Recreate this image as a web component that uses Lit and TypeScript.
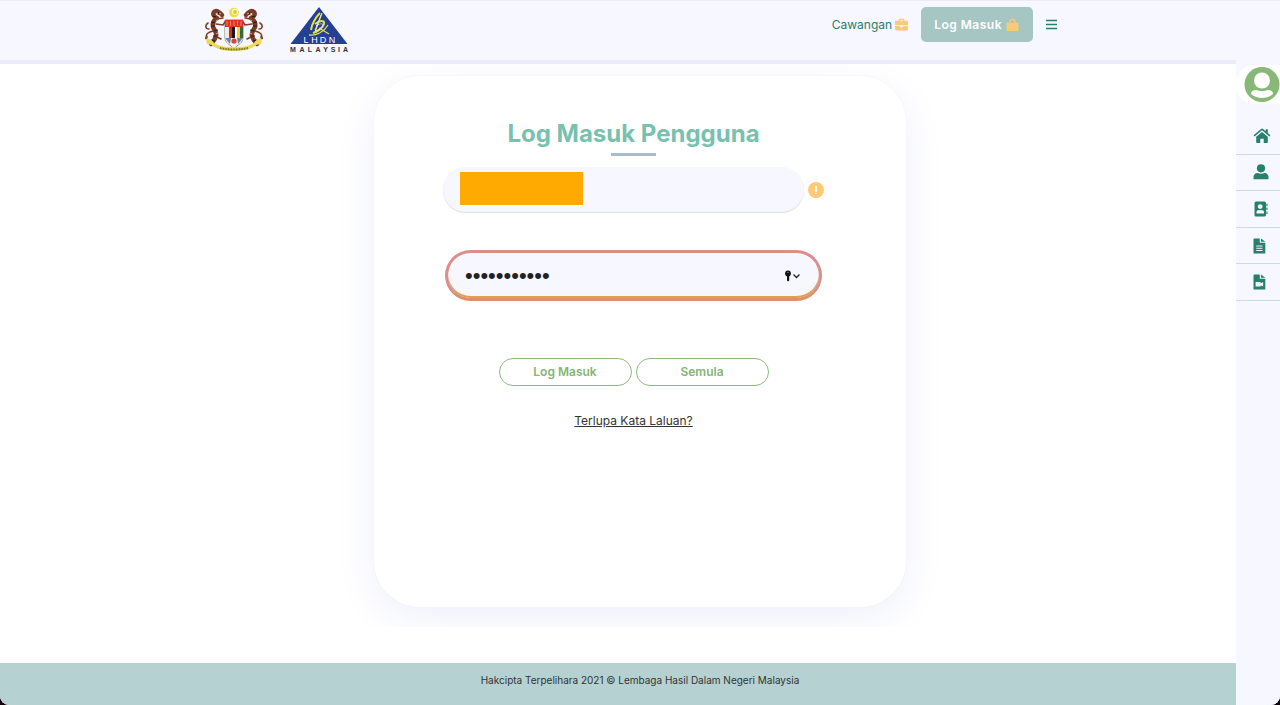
import { LitElement, html, css, svg } from "lit";
import { customElement, state } from "lit/decorators.js";

const sideLinks = [
  {
    label: "Laman Utama",
    icon: svg`<svg class="icon" viewBox="0 0 18 16"><path d="M9 3.900 3.200 8.800v5.500c0 .4.3.7.7.7h3.400v-4.300h3.400V15h3.400c.4 0 .7-.3.7-.7V8.800z"/><path d="M17.400 7.300 14.800 5V1.200h-2.100v2L10 .9a1.500 1.500 0 0 0-2 0L.6 7.300l1 1.200L9 2.300l7.400 6.200z"/></svg>`,
  },
  {
    label: "Profil",
    icon: svg`<svg class="icon" viewBox="0 0 18 16"><circle cx="8" cy="4.300" r="4.100"/><path d="M.5 15.200v-2.400c0-2.200 1.600-3.800 4-3.900 2.200 1 4.800 1 7 0 2.400.1 4 1.700 4 3.900v2.400z"/></svg>`,
  },
  {
    label: "Hubungi",
    icon: svg`<svg class="icon" viewBox="0 0 18 16"><path fill-rule="evenodd" d="M3 .5h8.500a1.500 1.500 0 0 1 1.500 1.500v12a1.500 1.500 0 0 1-1.500 1.500H3A1.500 1.500 0 0 1 1.500 14V2A1.500 1.500 0 0 1 3 .5zm4.200 2.700a2.400 2.400 0 1 0 0 4.800 2.400 2.400 0 0 0 0-4.800zM3.500 12.600h7.500v-1.400c0-1.500-1.200-2.300-2.400-2.300-.9.400-1.800.400-2.700 0-1.200 0-2.400.8-2.400 2.300z"/><path d="M13.400 2.800h1.100v2.500h-1.100zm0 3.800h1.100v2.500h-1.100zm0 3.800h1.100v2.500h-1.100z"/></svg>`,
  },
  {
    label: "Borang",
    icon: svg`<svg class="icon" viewBox="0 0 18 16"><path fill-rule="evenodd" d="M1.500.5h5.300v4.300h5.500v10.700H.5v-14a1 1 0 0 1 1-1zM3.300 7.500v1h6.200v-1zm0 2.200v1h6.200v-1zm0 2.200v1h6.200v-1z"/><path d="M8 .5 12.300 3.800H8z"/></svg>`,
  },
  {
    label: "Video",
    icon: svg`<svg class="icon" viewBox="0 0 18 16"><path fill-rule="evenodd" d="M1.500.5h5.300v4.300h5.500v10.700H.5v-14a1 1 0 0 1 1-1zM2.600 8v4.600h5v-1.400l2.500 1.400V8L7.600 9.400V8z"/><path d="M8 .5 12.300 3.800H8z"/></svg>`,
  },
];

const tiger = svg`
  <path d="M17 8c-3-4-6-5-8-3-2 3 1 5 3 6-3 2-5 5-4 9 2 4 4 6 3 9-1 4-3 6-5 8" fill="none" stroke="#7b3b25" stroke-width="4.500" stroke-linecap="round" stroke-linejoin="round"/>
  <path d="M12 12l6-1M11 17l7 1 2-3M8 24c-4 1-8 3-6 6 0 2-2 2-2 0M10 29l6 3M3 16c-3 2-3 6 1 6" fill="none" stroke="#823e24" stroke-width="1.600" stroke-linecap="round"/>
  <path d="m8 9 3 1M6 15l4 1M6 19l4 0M9 24l4-1M8 29l4 0M6 33l4 1M14 5l-1 3" stroke="#2b1712" stroke-width="1"/>
  <path d="m14 6 2 1M11 14l2-1M11 27l2-1" stroke="#e5a87a" stroke-width="1"/>`;

const crest = svg`
  <svg class="crest" viewBox="0 0 58 46" role="img" aria-label="Jata Negara Malaysia">
    <circle cx="29" cy="5.500" r="4.800" fill="#f0dc43"/>
    <circle cx="30" cy="4.800" r="3" fill="#fafbe9"/>
    <circle cx="30" cy="5" r="2" fill="#e2ca34"/>
    ${tiger}
    <g transform="translate(58 0) scale(-1 1)">${tiger}</g>
    <path d="M20 13h18v17c0 6-5 8-9 11-4-3-9-5-9-11z" fill="#fff" stroke="#554b40" stroke-width=".7"/>
    <path d="M20 13h18v7H20z" fill="#df3029"/>
    <path d="M22 14v5M25.500 14v5M29 14v5M32.500 14v5M36 14v5" stroke="#f19a60" stroke-width=".8"/>
    <path d="M20 20h4v11h-4z" fill="#e8efe2"/>
    <path d="M24 20h3v11h-3z" fill="#cf2a2b"/>
    <path d="M27 20h3v11h-3z" fill="#191919"/>
    <path d="M30 20h2v11h-2z" fill="#fff"/>
    <path d="M32 20h3v11h-3z" fill="#efcf35"/>
    <path d="M35 20h3v11h-3z" fill="#36674b"/>
    <path d="M20 31h18c-1 5-5 6-9 10-4-4-8-5-9-10z" fill="#f4f2e5"/>
    <path d="m20 31 5 6 1-6zM38 31l-5 6-1-6z" fill="#6f83ad"/>
    <circle cx="29" cy="34" r="2.600" fill="#dc4142"/>
    <path d="M1 32c4-1 6 1 8 4 6 4 14 4 20 4s14 0 20-4c2-3 4-5 8-4l-1 5-5 1c-5 5-14 6-22 6S12 43 7 38l-5-1z" fill="#eadc57"/>
    <path d="M15 41c8 2 20 2 28 0" fill="none" stroke="#776c2b" stroke-width="2" stroke-dasharray="1 .6"/>
  </svg>`;

const lhdn = svg`
  <svg class="lhdn" viewBox="0 0 60 46" role="img" aria-label="LHDN Malaysia">
    <path d="M30 0 58.500 37H1.500z" fill="#253f93"/>
    <path d="M31 6c-4 4-8 11-9 17M26 17c5-4 10-4 9 0-1 4-7 8-11 9" fill="none" stroke="#e1df45" stroke-width="2"/>
    <path d="M33 6 26 25M30 21l10 6M39 18c-4 7-12 11-19 10" fill="none" stroke="#e1df45" stroke-width="1.300"/>
    <path d="m32 8-6 15M27 19c4-3 8-3 7 0-1 2-4 4-8 5" fill="none" stroke="#fff" stroke-width=".6"/>
    <g class="lhdn-name">
      ${[..."LHDN"].map((c, i) => svg`<text x=${[17, 25.500, 34, 43][i]} y="36" text-anchor="middle">${c}</text>`)}
    </g>
    <g class="lhdn-land">
      ${[..."MALAYSIA"].map((c, i) => svg`<text x=${[4, 13, 21, 29, 36.500, 44, 50, 56.500][i]} y="45" text-anchor="middle">${c}</text>`)}
    </g>
  </svg>`;

@customElement("app-root")
export class AppRoot extends LitElement {
  @state() private password = "kata-laluan";

  static styles = css`
    :host {
      display: block;
      background: #160309;
      font-family: Inter, "Liberation Sans", sans-serif;
      color: #333;
    }
    * { box-sizing: border-box; }
    a { color: inherit; text-decoration: none; }
    .page {
      position: relative;
      display: flex;
      flex-direction: column;
      min-height: 100vh;
      background: #fff;
      border-radius: 0 0 9px 9px;
      overflow: hidden;
    }
    .header {
      background: #f6f7ff;
      border-top: 1px solid #ebecf3;
      border-bottom: 4px solid #ebecfa;
    }
    .header-inner {
      display: flex;
      justify-content: space-between;
      align-items: flex-start;
      max-width: 870px;
      height: 59px;
      margin: 0 auto;
      padding: 6px 18px 0 0;
    }
    .brand { display: flex; gap: 26px; }
    .crest { width: 58px; height: 46px; }
    .lhdn { width: 60px; height: 46px; }
    .lhdn-name { font: 9px "Liberation Sans", sans-serif; fill: #fff; }
    .lhdn-land { font: bold 7px "Liberation Sans", sans-serif; fill: #30313c; }
    .nav { display: flex; align-items: center; gap: 13px; color: #26806c; }
    .nav-link { display: flex; align-items: center; gap: 3px; font-size: 12px; }
    .nav-icon { width: 13px; height: 14px; fill: #fbca74; }
    .login-link {
      display: flex;
      align-items: center;
      gap: 4px;
      height: 35px;
      padding: 0 14px 0 13px;
      border-radius: 5px;
      background: #a5c6c3;
      color: #fff;
      font-size: 12px;
      font-weight: 600;
      letter-spacing: 0.5px;
    }
    .menu { display: block; padding: 0; border: 0; background: none; color: inherit; }
    .menu-icon { display: block; width: 11px; height: 11px; }
    .section { flex: none; padding: 12px 60px 20px; overflow: hidden; }
    .card {
      display: flex;
      flex-direction: column;
      align-items: center;
      max-width: 532px;
      min-height: 531px;
      margin: 0 auto;
      padding: 43px 82px 0 69px;
      border-radius: 46px;
      background: #fff;
      box-shadow: 0 12px 44px #eff0fb, 0 0 2px #eeeef4;
    }
    .title {
      margin: 0;
      color: #77c1ae;
      font-size: 24px;
      line-height: 30px;
      font-weight: 700;
      white-space: nowrap;
    }
    .rule { width: 45px; height: 3px; margin-top: 4px; background: #a9bbcf; }
    .form { display: flex; flex-direction: column; align-items: center; width: 100%; margin-top: 11px; }
    .row { display: flex; align-items: center; gap: 4px; width: 100%; }
    .field { border: 0; outline: 0; background: #f6f7ff; color: #222; }
    .user {
      flex: 1;
      min-width: 0;
      height: 45px;
      border-radius: 23px;
      padding: 0 17px;
      background: linear-gradient(#ffaa00, #ffaa00) 17px 5px / 123px 33px no-repeat #f6f7ff;
      box-shadow: 0 1px 1px #dcdde4;
      font: 14px Inter, "Liberation Sans", sans-serif;
    }
    .info { width: 16px; height: 16px; padding: 0; border: 0; background: none; }
    .info-icon { display: block; width: 16px; height: 16px; }
    .secret {
      display: flex;
      align-items: center;
      width: 377px;
      max-width: 100%;
      height: 51px;
      margin-top: 38px;
      padding: 0 18px 0 17px;
      border: 3px solid #dc8e8a;
      border-bottom-color: #dc9068;
      border-radius: 26px;
      background: #f6f7ff;
      box-shadow: inset 0 -2px 0 #e0a050;
    }
    .password {
      flex: 1;
      min-width: 0;
      height: 40px;
      padding: 0;
      background: transparent;
      font: 22px "Liberation Sans", sans-serif;
    }
    .key-icon { width: 16px; height: 12px; }
    .actions { display: flex; gap: 4px; margin-top: 57px; }
    .action {
      width: 133px;
      height: 28px;
      padding: 0;
      border: 1px solid #8ebb7c;
      border-radius: 14px;
      background: #fff;
      color: #84b571;
      font: 600 12px/16px Inter, "Liberation Sans", sans-serif;
    }
    .forgot { margin-top: 27px; font-size: 12px; line-height: 16px; text-decoration: underline; }
    .footer {
      flex: 1;
      margin-top: 36px;
      padding: 9px 60px;
      background: #b6d1d1;
      font-size: 10px;
      line-height: 16px;
      text-align: center;
    }
    .sidebar {
      position: absolute;
      top: 60px;
      right: 0;
      bottom: 0;
      width: 44px;
      background: #f6f7ff;
    }
    .avatar { display: block; height: 39px; margin-top: 5px; padding: 2px 0 0 8px; border-radius: 18px 0 0 18px; background: #fff; }
    .avatar-icon { display: block; width: 36px; height: 36px; }
    .side-list {
      display: grid;
      grid-auto-rows: 1fr;
      height: 183px;
      margin: 14px 0 0;
      padding: 0;
      list-style: none;
    }
    .side-item { border-bottom: 1px solid #c6dcea; }
    .side-link {
      display: flex;
      align-items: center;
      height: 100%;
      padding-left: 17px;
      color: #26806c;
    }
    .icon { width: 18px; height: 16px; fill: currentColor; }
  `;

  render() {
    return html`
      <div class="page">
        <header class="header">
          <div class="header-inner">
            <div class="brand">${crest}${lhdn}</div>
            <nav class="nav">
              <a class="nav-link" href="#cawangan">Cawangan
                <svg class="nav-icon" viewBox="0 0 14 14"><path fill-rule="evenodd" d="M4 2.500V1.200C4 .6 4.400.200 5 .200h4c.6 0 1 .4 1 1v1.300h2.600c.8 0 1.400.6 1.400 1.400v3.300H0V3.900C0 3.100.6 2.500 1.400 2.500zm1.500 0h3v-.9h-3zM0 8h5.300v1.300h3.400V8H14v3.400c0 .8-.6 1.400-1.400 1.400H1.400C.6 12.800 0 12.200 0 11.400z"/></svg>
              </a>
              <a class="login-link" href="#login">Log Masuk
                <svg class="nav-icon" viewBox="0 0 14 14"><path fill-rule="evenodd" d="M3.500 4.500V3.700a3.500 3.500 0 0 1 7 0v.8h1.700c.7 0 1.300.6 1.300 1.300v6.200c0 .8-.6 1.500-1.500 1.500H2C1.100 13.500.500 12.800.500 12V5.800C.5 5.100 1.100 4.500 1.800 4.500zm1.500 0h4v-.8a2 2 0 0 0-4 0z"/></svg>
              </a>
              <button class="menu" type="button" aria-label="Menu">
                <svg class="menu-icon" viewBox="0 0 11 11"><path d="M0 1.500h11M0 5.500h11M0 9.500h11" stroke="currentColor" stroke-width="1.600"/></svg>
              </button>
            </nav>
          </div>
        </header>

        <main class="section">
          <div class="card">
            <h1 class="title">Log Masuk Pengguna</h1>
            <div class="rule"></div>
            <form class="form" @submit=${(e: Event) => e.preventDefault()}>
              <div class="row">
                <input class="field user" type="text" aria-label="No. Pengenalan" />
                <button class="info" type="button" aria-label="Maklumat">
                  <svg class="info-icon" viewBox="0 0 16 16"><circle cx="8" cy="8" r="8" fill="#fbca74"/><path d="M8 4v5.800" stroke="#fff" stroke-width="1.800"/><circle cx="8" cy="11.500" r=".7" fill="#fff"/></svg>
                </button>
              </div>
              <div class="secret">
                <input class="field password" type="password" aria-label="Kata Laluan" .value=${this.password}
                  @input=${(e: Event) => (this.password = (e.target as HTMLInputElement).value)} />
                <svg class="key-icon" viewBox="0 0 16 12"><circle cx="3" cy="3.500" r="2.900" fill="#111"/><path d="M2 6h2.200v4.500L3.100 11.500 2 10.500z" fill="#111"/><circle cx="3" cy="2.200" r=".5" fill="#f6f7ff"/><path d="m8.500 4.500 3 3 3-3" fill="none" stroke="#222" stroke-width="1.300"/></svg>
              </div>
              <div class="actions">
                <button class="action" type="submit">Log Masuk</button>
                <button class="action" type="reset">Semula</button>
              </div>
            </form>
            <a class="forgot" href="#lupa">Terlupa Kata Laluan?</a>
          </div>
        </main>

        <footer class="footer">Hakcipta Terpelihara 2021 © Lembaga Hasil Dalam Negeri Malaysia</footer>

        <aside class="sidebar">
          <a class="avatar" href="#akaun" aria-label="Akaun">
            <svg class="avatar-icon" viewBox="0 0 36 36"><circle cx="18" cy="17.500" r="17.500" fill="#88b878"/><circle cx="18" cy="13.500" r="8" fill="#fff"/><path d="M7 27c0-3 2.500-4 5-4 4 1.500 8 1.500 12 0 2.500 0 5 1 5 4-6 5.300-16 5.300-22 0z" fill="#fff"/></svg>
          </a>
          <ul class="side-list">
            ${sideLinks.map((l) => html`<li class="side-item"><a class="side-link" href="#" aria-label=${l.label}>${l.icon}</a></li>`)}
          </ul>
        </aside>
      </div>
    `;
  }
}
